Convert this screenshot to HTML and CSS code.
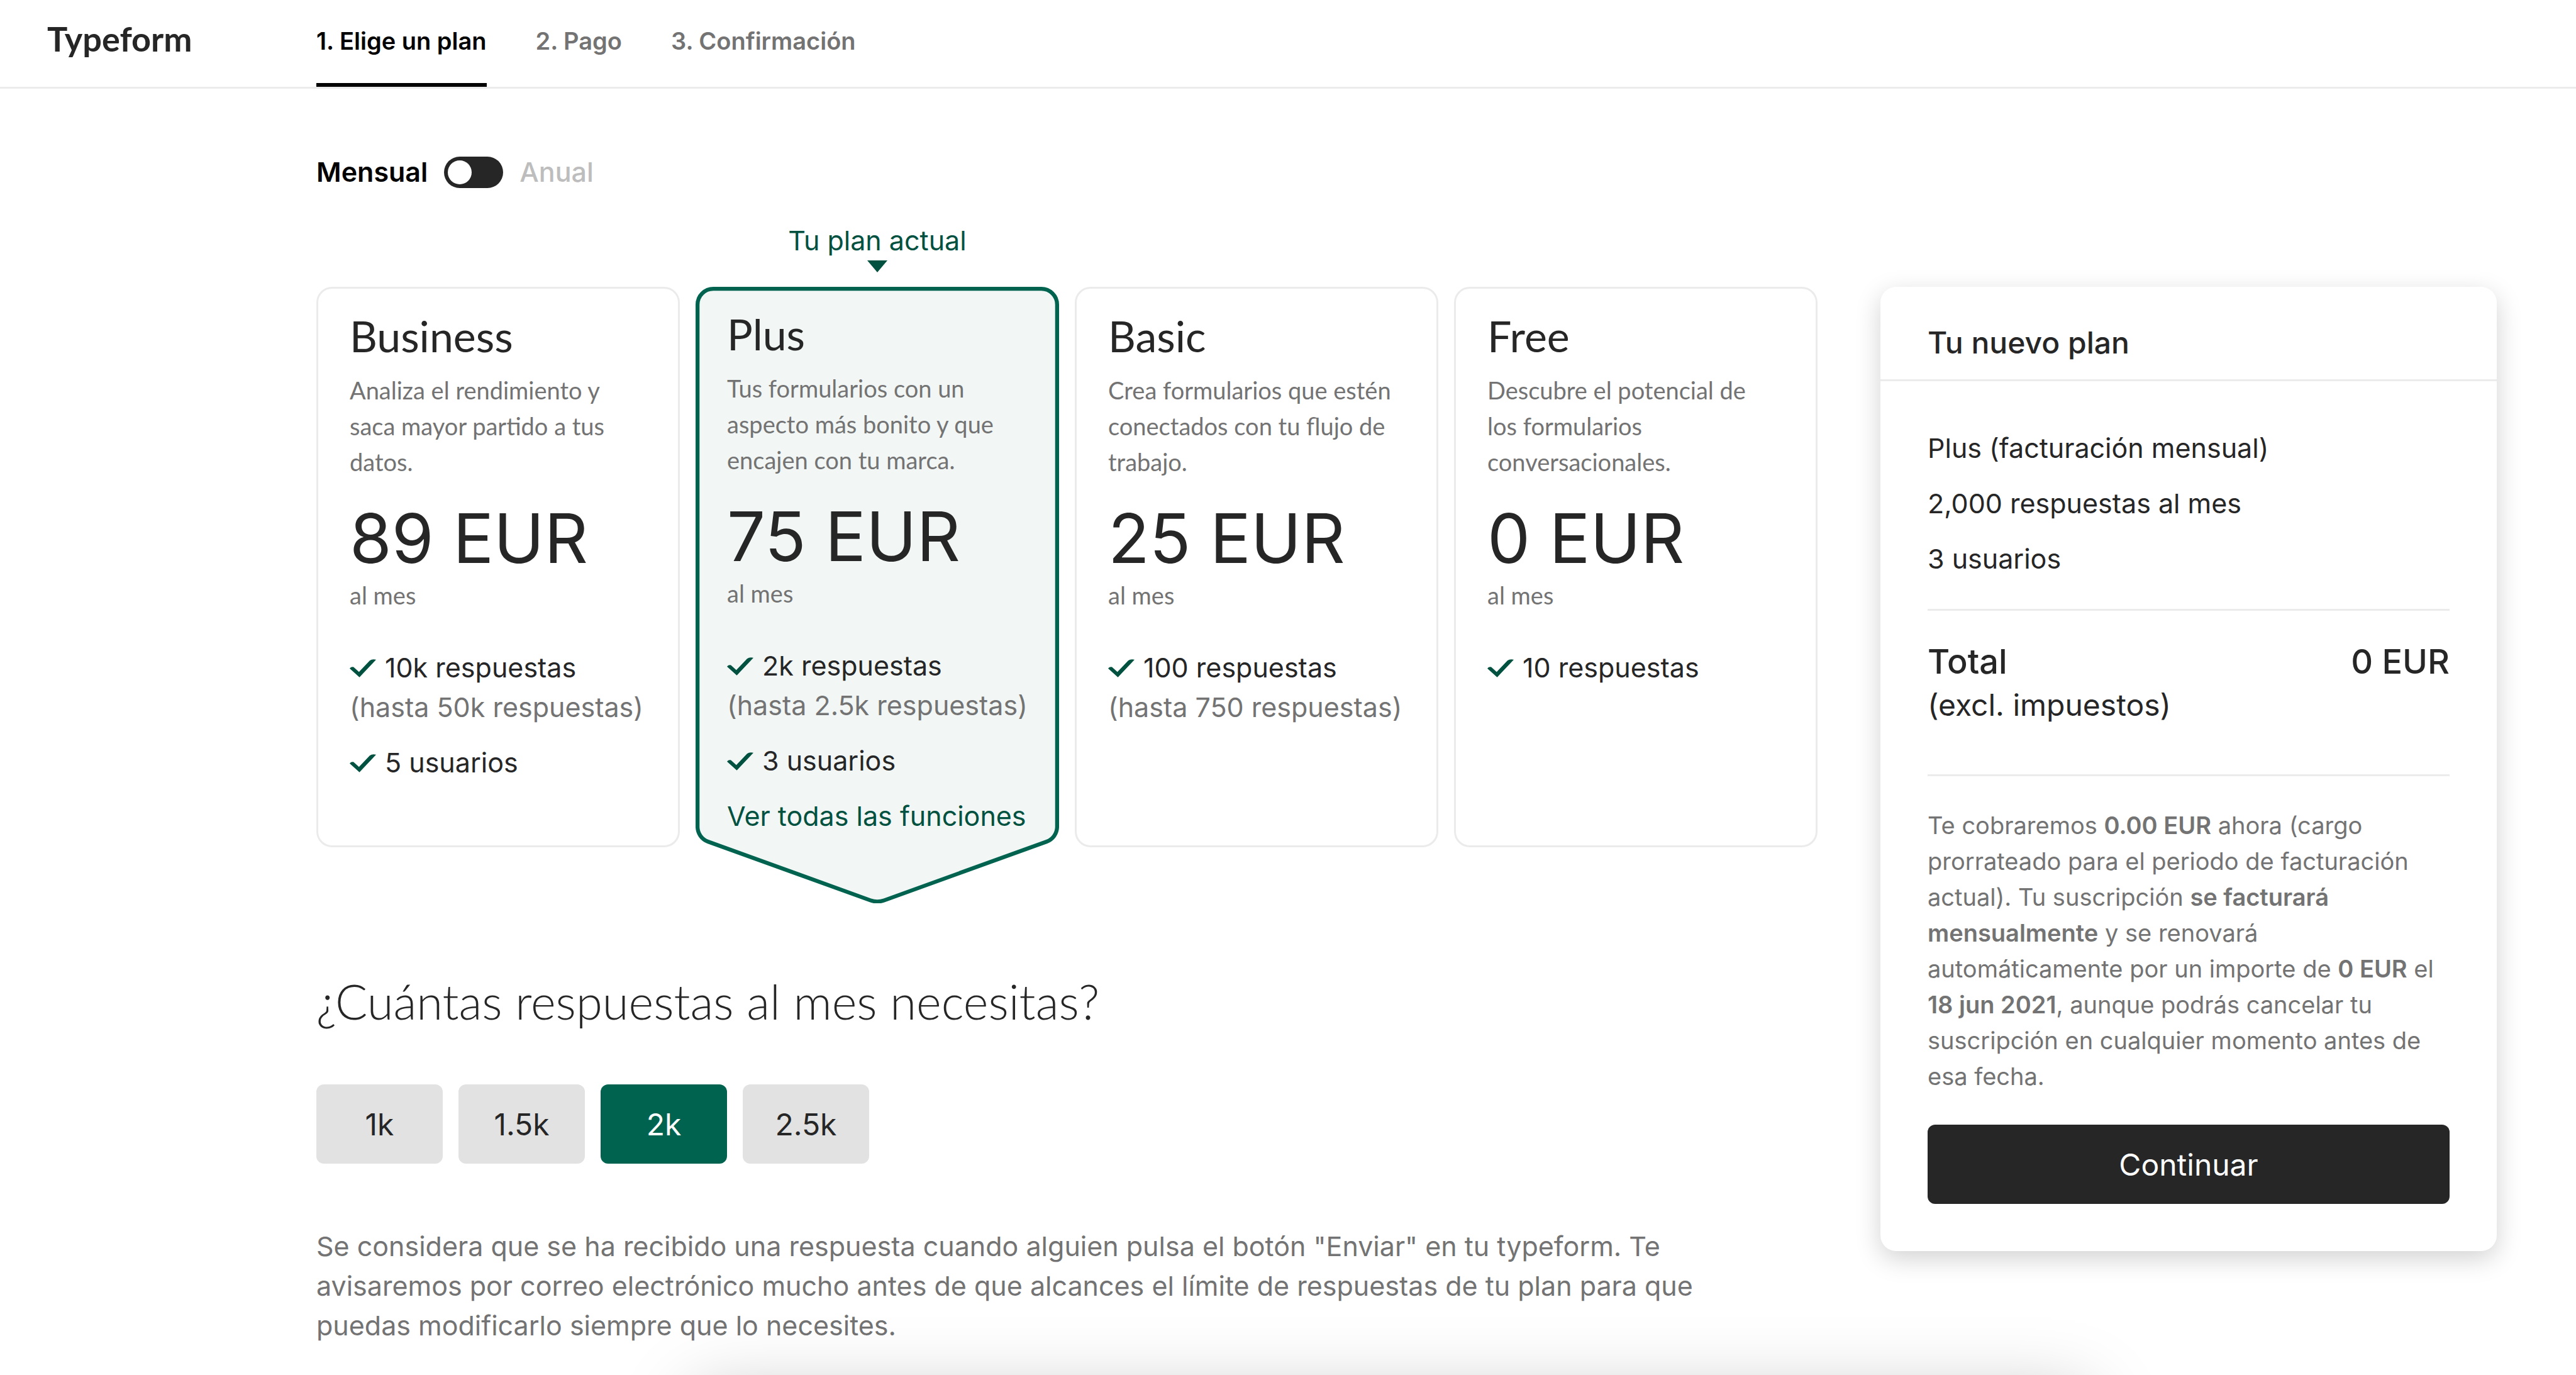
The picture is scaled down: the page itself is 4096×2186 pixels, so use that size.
FILE: index.html
```html
<!DOCTYPE html>
<html lang="es">
<head>
    <meta charset="UTF-8">
    <meta name="viewport" content="width=device-width, initial-scale=1.0">
    <title>Typeform - Elige un plan</title>
    <link rel="stylesheet" href="styles.css">
</head>
<body>
    <header class="header">
        <a href="#" class="logo">Typeform</a>
        <nav class="steps">
            <a href="#" class="step active">1. Elige un plan</a>
            <a href="#" class="step">2. Pago</a>
            <a href="#" class="step">3. Confirmación</a>
        </nav>
    </header>

    <div class="page">
        <main class="main">
            <div class="billing">
                <label for="billing" class="billing-on">Mensual</label>
                <input type="checkbox" id="billing" class="switch">
                <label for="billing" class="billing-off">Anual</label>
            </div>

            <div class="plans">
                <article class="plan">
                    <h2>Business</h2>
                    <p class="desc">Analiza el rendimiento y saca mayor partido a tus datos.</p>
                    <p class="price">89 EUR</p>
                    <p class="period">al mes</p>
                    <ul class="features">
                        <li><svg class="check" viewBox="0 0 54 38"><path d="M0 20 Q3 16 8 17 L19 27 L41 4 Q46 0 54 2 L20 38 Z"/></svg>10k respuestas <span class="limit">(hasta 50k respuestas)</span></li>
                        <li><svg class="check" viewBox="0 0 54 38"><path d="M0 20 Q3 16 8 17 L19 27 L41 4 Q46 0 54 2 L20 38 Z"/></svg>5 usuarios</li>
                    </ul>
                </article>

                <article class="plan current">
                    <svg class="plan-shape" viewBox="0 0 736 1248" preserveAspectRatio="none">
                        <path d="M36 4 H700 A32 32 0 0 1 732 36 V1094 A32 32 0 0 1 711 1123 L382 1242 Q368 1247 354 1242 L25 1123 A32 32 0 0 1 4 1094 V36 A32 32 0 0 1 36 4 Z"/>
                    </svg>
                    <span class="current-label">Tu plan actual</span>
                    <h2>Plus</h2>
                    <p class="desc">Tus formularios con un aspecto más bonito y que encajen con tu marca.</p>
                    <p class="price">75 EUR</p>
                    <p class="period">al mes</p>
                    <ul class="features">
                        <li><svg class="check" viewBox="0 0 54 38"><path d="M0 20 Q3 16 8 17 L19 27 L41 4 Q46 0 54 2 L20 38 Z"/></svg>2k respuestas <span class="limit">(hasta 2.5k respuestas)</span></li>
                        <li><svg class="check" viewBox="0 0 54 38"><path d="M0 20 Q3 16 8 17 L19 27 L41 4 Q46 0 54 2 L20 38 Z"/></svg>3 usuarios</li>
                    </ul>
                    <a href="#" class="more">Ver todas las funciones</a>
                </article>

                <article class="plan">
                    <h2>Basic</h2>
                    <p class="desc">Crea formularios que estén conectados con tu flujo de trabajo.</p>
                    <p class="price">25 EUR</p>
                    <p class="period">al mes</p>
                    <ul class="features">
                        <li><svg class="check" viewBox="0 0 54 38"><path d="M0 20 Q3 16 8 17 L19 27 L41 4 Q46 0 54 2 L20 38 Z"/></svg>100 respuestas <span class="limit">(hasta 750 respuestas)</span></li>
                    </ul>
                </article>

                <article class="plan">
                    <h2>Free</h2>
                    <p class="desc">Descubre el potencial de los formularios conversacionales.</p>
                    <p class="price">0 EUR</p>
                    <p class="period">al mes</p>
                    <ul class="features">
                        <li><svg class="check" viewBox="0 0 54 38"><path d="M0 20 Q3 16 8 17 L19 27 L41 4 Q46 0 54 2 L20 38 Z"/></svg>10 respuestas</li>
                    </ul>
                </article>
            </div>

            <section class="responses">
                <h1>¿Cuántas respuestas al mes necesitas?</h1>
                <div class="options">
                    <button type="button" class="option">1k</button>
                    <button type="button" class="option">1.5k</button>
                    <button type="button" class="option selected">2k</button>
                    <button type="button" class="option">2.5k</button>
                </div>
                <p class="note">Se considera que se ha recibido una respuesta cuando alguien pulsa el botón "Enviar" en tu typeform. Te avisaremos por correo electrónico mucho antes de que alcances el límite de respuestas de tu plan para que puedas modificarlo siempre que lo necesites.</p>
            </section>
        </main>

        <aside class="summary">
            <h3>Tu nuevo plan</h3>
            <div class="summary-body">
                <ul class="items">
                    <li>Plus (facturación mensual)</li>
                    <li>2,000 respuestas al mes</li>
                    <li>3 usuarios</li>
                </ul>
                <div class="total">
                    <div class="total-row"><span>Total</span><span>0 EUR</span></div>
                    <p class="taxes">(excl. impuestos)</p>
                </div>
                <p class="terms">Te cobraremos <b>0.00 EUR</b> ahora (cargo prorrateado para el periodo de facturación actual). Tu suscripción <b>se facturará mensualmente</b> y se renovará automáticamente por un importe de <b>0 EUR</b> el <b>18 jun 2021</b>, aunque podrás cancelar tu suscripción en cualquier momento antes de esa fecha.</p>
                <button type="button" class="continue">Continuar</button>
            </div>
        </aside>
    </div>

    <div class="bottom-shadow"></div>
</body>
</html>
```

FILE: styles.css
```css
* {
    box-sizing: border-box;
}
body {
    margin: 0;
    height: 100vh;
    overflow: hidden;
    background: #fff;
    color: #262627;
    font-family: Inter, "Liberation Sans", sans-serif;
    font-size: 43px;
    line-height: 63px;
}
h1, h2, h3, p, ul {
    margin: 0;
    padding: 0;
    font-weight: 400;
}
ul {
    list-style: none;
}
a {
    color: inherit;
    text-decoration: none;
}
button {
    border: none;
    border-radius: 12px;
    font-family: inherit;
    font-size: 48px;
    height: 126px;
    padding: 0;
    cursor: pointer;
}

/* header */
.header {
    display: flex;
    height: 141px;
    border-bottom: 3px solid #ebebeb;
}
.logo {
    width: 503px;
    padding-left: 75px;
    font-family: Lato, sans-serif;
    font-weight: 700;
    font-size: 54px;
    line-height: 124px;
}
.steps {
    display: flex;
    gap: 78px;
    font-size: 38px;
    font-weight: 600;
    color: #737373;
}
.step {
    height: 138px;
    line-height: 130px;
}
.step.active {
    color: #000;
    border-bottom: 6px solid #000;
}

/* layout */
.page {
    display: flex;
    justify-content: space-between;
    align-items: flex-start;
    padding: 0 126px 0 503px;
}
.main {
    width: 2387px;
    padding-top: 101px;
}

/* monthly / yearly */
.billing {
    display: flex;
    align-items: center;
    height: 63px;
    gap: 26px;
    font-weight: 600;
    color: #000;
}
.billing-off {
    color: #bdbdbd;
    font-weight: 500;
}
.switch {
    appearance: none;
    width: 94px;
    height: 50px;
    margin: 0;
    padding: 6px;
    border-radius: 25px;
    background: #262627;
}
.switch::before {
    content: "";
    display: block;
    width: 38px;
    height: 38px;
    border-radius: 50%;
    background: #fff;
}
.switch:checked::before {
    margin-left: auto;
}

/* plans */
.plans {
    display: grid;
    grid-template-columns: repeat(4, 1fr);
    gap: 25px;
    margin-top: 151px;
}
.plan {
    height: 891px;
    padding: 37px 40px 0 50px;
    border: 3px solid #ebebeb;
    border-radius: 25px;
}
.plan h2 {
    font-family: Lato, sans-serif;
    font-size: 68px;
    line-height: 76px;
}
.desc {
    margin-top: 20px;
    max-width: 460px;
    font-family: Lato, sans-serif;
    font-size: 38px;
    line-height: 57px;
    color: #737373;
}
.price {
    margin-top: 33px;
    font-size: 108px;
    line-height: 120px;
}
.period {
    margin-top: 2px;
    font-family: Lato, sans-serif;
    font-size: 38px;
    line-height: 57px;
    color: #737373;
}
.features {
    margin-top: 55px;
    white-space: nowrap;
}
.features li + li {
    margin-top: 25px;
}
.check {
    width: 42px;
    height: 30px;
    margin-right: 14px;
    fill: #00513f;
}
.limit {
    display: block;
    color: #737373;
}
.more {
    display: block;
    margin-top: 25px;
    white-space: nowrap;
    color: #00513f;
}
.plan.current {
    position: relative;
    border: none;
}
.plan-shape {
    position: absolute;
    z-index: -1;
    top: 0;
    left: 0;
    width: 100%;
    height: 110%;
    fill: #f2f6f5;
    stroke: #006350;
    stroke-width: 8;
}
.current-label {
    position: absolute;
    left: 0;
    right: 0;
    bottom: 100%;
    height: 105px;
    text-align: center;
    color: #00513f;
}
.current-label::after {
    content: "";
    display: block;
    width: 0;
    margin: 0 auto;
    border: 16px solid transparent;
    border-top: 19px solid #00513f;
    border-bottom: 0;
}

/* responses */
.responses {
    margin-top: 195px;
}
.responses h1 {
    font-family: Lato, sans-serif;
    font-weight: 300;
    font-size: 76px;
    line-height: 100px;
}
.options {
    display: flex;
    gap: 25px;
    margin-top: 82px;
}
.option {
    width: 201px;
    background: #e2e2e2;
    color: #262627;
}
.option.selected {
    background: #006350;
    color: #fff;
}
.note {
    margin-top: 100px;
    max-width: 2260px;
    color: #737373;
}

/* summary */
.summary {
    width: 980px;
    margin-top: 315px;
    border-radius: 25px;
    box-shadow: 0 12px 40px rgba(0, 0, 0, 0.18);
}
.summary h3 {
    padding: 30px 75px 0;
    border-bottom: 3px solid #ebebeb;
    font-size: 48px;
    font-weight: 500;
    line-height: 117px;
}
.summary-body {
    padding: 75px;
}
.items {
    padding-bottom: 23px;
}
.items li {
    margin-bottom: 25px;
}
.total {
    padding: 43px 0 79px;
    border-top: 3px solid #ebebeb;
    border-bottom: 3px solid #ebebeb;
}
.total-row {
    display: flex;
    justify-content: space-between;
    font-size: 54px;
    font-weight: 500;
    line-height: 75px;
}
.taxes {
    font-size: 48px;
}
.terms {
    margin-top: 50px;
    font-size: 38px;
    line-height: 57px;
    color: #737373;
}
.terms b {
    font-weight: 600;
}
.continue {
    display: block;
    width: 100%;
    margin-top: 48px;
    background: #262627;
    color: #fff;
}

/* shadow of the bar that sits under the fold */
.bottom-shadow {
    position: fixed;
    top: 100%;
    left: 27%;
    width: 54%;
    height: 400px;
    box-shadow: 0 33px 110px rgba(0, 0, 0, 0.25);
}
```
